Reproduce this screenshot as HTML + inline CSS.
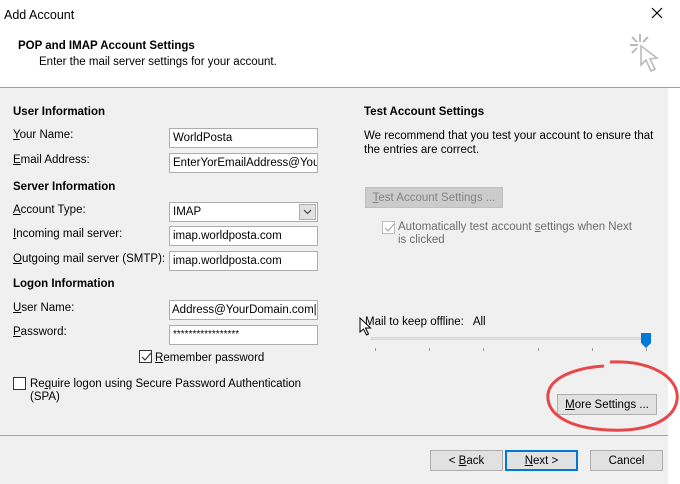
<!DOCTYPE html>
<html><head><style>
*{margin:0;padding:0;box-sizing:border-box}
body{width:680px;height:484px;position:relative;overflow:hidden;background:#fff;font-family:"Liberation Sans",sans-serif;font-size:11.5px;color:#000}
.a{position:absolute;white-space:nowrap}
.b{font-weight:bold}
.in{position:absolute;background:#fff;border:1px solid #adadad;height:20px;padding:3px 3px;font-size:11.5px;overflow:hidden;white-space:nowrap;left:169px;width:149px}
.btn{position:absolute;background:#e1e1e1;border:1px solid #adadad;height:21px;text-align:center;line-height:20px}
.cb{position:absolute;width:13px;height:13px;border:1px solid #333;background:#fff}
u{text-decoration:underline}
</style></head><body>
<div class="a" style="left:4px;top:8px;font-size:12.5px">Add Account</div>
<svg class="a" style="left:650px;top:6px" width="14" height="14"><path d="M2 2L12 12M12 2L2 12" stroke="#000" stroke-width="1.2"/></svg>
<div class="a b" style="left:18px;top:40px">POP and IMAP Account Settings</div>
<div class="a" style="left:39px;top:56px">Enter the mail server settings for your account.</div>
<svg class="a" style="left:626px;top:32px" width="36" height="52"><g stroke="#bbb" stroke-width="2" fill="none"><path d="M14 2v8M4 13h8M6 5l5 5M22 5l-5 5M6 21l5-5"/><path d="M15 14l0 19 5-5 5 11 4-2-5-10 7-1z" fill="#fff" stroke-width="1.6"/></g></svg>
<div class="a" style="left:0;top:87px;width:680px;height:1px;background:#a0a0a0"></div>
<div class="a" style="left:0;top:88px;width:668px;height:396px;background:#f0f0f0"></div>

<div class="a b" style="left:13px;top:106px">User Information</div>
<div class="a" style="left:13px;top:129px"><u>Y</u>our Name:</div>
<div class="in" style="top:128px">WorldPosta</div>
<div class="a" style="left:13px;top:154px"><u>E</u>mail Address:</div>
<div class="in" style="top:153px">EnterYorEmailAddress@YourD</div>
<div class="a b" style="left:13px;top:181px">Server Information</div>
<div class="a" style="left:13px;top:204px"><u>A</u>ccount Type:</div>
<div class="in" style="top:202px">IMAP</div>
<div class="a" style="left:299px;top:204px;width:17px;height:16px;background:#e1e1e1;border:1px solid #adadad"><svg width="15" height="14"><path d="M4 5l3.5 3.5L11 5" stroke="#333" fill="none"/></svg></div>
<div class="a" style="left:13px;top:228px"><u>I</u>ncoming mail server:</div>
<div class="in" style="top:226px">imap.worldposta.com</div>
<div class="a" style="left:13px;top:253px"><u>O</u>utgoing mail server (SMTP):</div>
<div class="in" style="top:251px">imap.worldposta.com</div>
<div class="a b" style="left:13px;top:278px">Logon Information</div>
<div class="a" style="left:13px;top:302px"><u>U</u>ser Name:</div>
<div class="in" style="top:300px;padding-left:2px">Address@YourDomain.com|</div>
<div class="a" style="left:13px;top:326px"><u>P</u>assword:</div>
<div class="in" style="top:325px;font-size:10px">*****************</div>
<div class="cb" style="left:139px;top:350px"><svg width="12" height="12" style="position:absolute;left:0;top:0"><path d="M2 6l3 3 6-7" stroke="#333" fill="none" stroke-width="1.2"/></svg></div>
<div class="a" style="left:155px;top:352px"><u>R</u>emember password</div>
<div class="cb" style="left:13px;top:377px"></div>
<div class="a" style="left:30px;top:378px">Re<u>q</u>uire logon using Secure Password Authentication</div>
<div class="a" style="left:30px;top:391px">(SPA)</div>

<div class="a b" style="left:364px;top:106px">Test Account Settings</div>
<div class="a" style="left:364px;top:129px;line-height:14px">We recommend that you test your account to ensure that<br>the entries are correct.</div>
<div class="btn" style="left:365px;top:187px;width:138px;color:#838383;background:#ccc;border-color:#bfbfbf"><u>T</u>est Account Settings ...</div>
<div class="cb" style="left:382px;top:221px;border-color:#bcbcbc"><svg width="12" height="12" style="position:absolute;left:0;top:0"><path d="M2 6l3 3 6-7" stroke="#aaa" fill="none" stroke-width="1.2"/></svg></div>
<div class="a" style="left:398px;top:221px;color:#6d6d6d;line-height:13px">Automatically test account <u>s</u>ettings when Next<br>is clicked</div>
<div class="a" style="left:365px;top:316px">Mail to keep offline:&nbsp;&nbsp; All</div>
<div class="a" style="left:371px;top:337px;width:278px;height:3px;background:#e3e3e3;border:1px solid #d6d6d6"></div>
<svg class="a" style="left:640px;top:333px" width="14" height="16"><path d="M1 0h10v10l-5 5-5-5z" fill="#0078d7"/></svg>
<svg class="a" style="left:370px;top:348px" width="285" height="6"><g stroke="#999"><path d="M5.5 0v3M59.5 0v3M113.5 0v3M168.5 0v3M222.5 0v3M276.5 0v3"/></g></svg>
<svg class="a" style="left:358px;top:317px" width="14" height="20"><path d="M2 1v14l3.5-3 3 6 2-1-3-6h5z" fill="#fff" stroke="#000"/></svg>
<div class="btn" style="left:557px;top:394px;width:100px"><u>M</u>ore Settings ...</div>
<svg class="a" style="left:540px;top:358px" width="140" height="80"><path d="M70 4C112 2 140 20 137 42 134 62 108 74 68 72 28 70 6 56 8 36 10 20 34 10 64 8" fill="none" stroke="#e8474a" stroke-width="3"/></svg>

<div class="a" style="left:0;top:435px;width:668px;height:1px;background:#a0a0a0"></div>
<div class="btn" style="left:430px;top:450px;width:73px">&lt; <u>B</u>ack</div>
<div class="btn" style="left:505px;top:450px;width:73px;border:2px solid #0078d7;line-height:18px"><u>N</u>ext &gt;</div>
<div class="btn" style="left:590px;top:450px;width:73px">Cancel</div>
</body></html>
